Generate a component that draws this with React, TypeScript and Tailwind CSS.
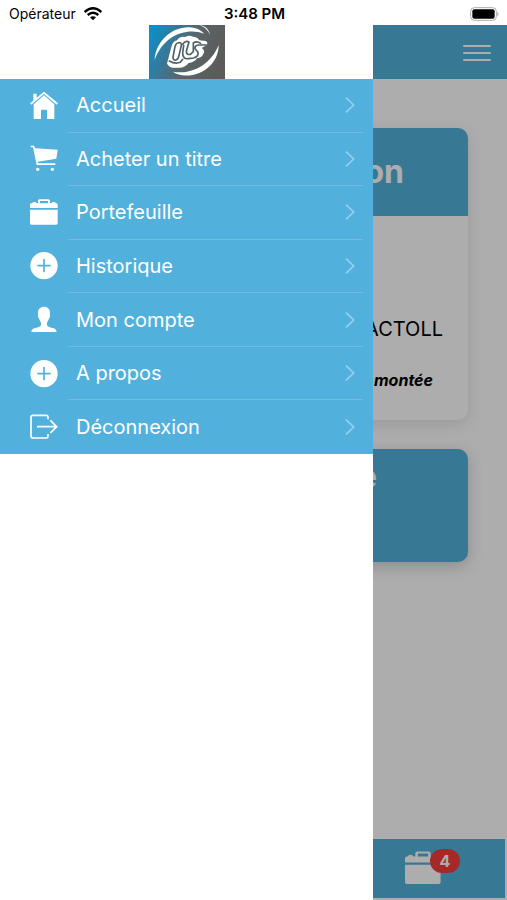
import React from "react";

const iconClass = "block h-7 w-7 shrink-0";

function HomeIcon() {
  return (
    <svg viewBox="0 0 84 84" className={iconClass} fill="currentColor" aria-hidden="true">
      <path d="M42 -1 84 34 80 38 42 6 4 38 0 34 10 26V5H20V17Z" />
      <path d="M42 10 73 37V81H51V53H33V81H11V37Z" />
    </svg>
  );
}

function CartIcon() {
  return (
    <svg viewBox="0 0 84 84" className={iconClass} fill="currentColor" aria-hidden="true">
      <path d="M1 2H12L16 10L83 14 79 41 23 50 24 55H76V60H20L9 7H3Z" />
      <circle cx="23" cy="73" r="5" />
      <circle cx="67" cy="73" r="5" />
    </svg>
  );
}

function CaseIcon({ className = iconClass }: { className?: string }) {
  return (
    <svg viewBox="0 0 84 84" className={className} fill="currentColor" aria-hidden="true">
      <path d="M0 27V17Q0 13 4 13H6Q8 9 13 9Q18 9 20 13H24V6Q24 1 29 1H55Q60 1 60 6V13H64Q66 9 71 9Q76 9 78 13Q83 13 83 17V27ZM30 13H54V6H30Z" fillRule="evenodd" />
      <path d="M0 32H83V73Q83 77 79 77H4Q0 77 0 73Z" />
    </svg>
  );
}

function PlusIcon() {
  return (
    <svg viewBox="0 0 84 84" className={iconClass} aria-hidden="true">
      <circle cx="42" cy="41" r="41" fill="currentColor" />
      <path d="M42 21V61M22 41H62" stroke="#52b1dc" strokeWidth="5" />
    </svg>
  );
}

function PersonIcon() {
  return (
    <svg viewBox="0 0 84 84" className={iconClass} fill="currentColor" aria-hidden="true">
      <path d="M42 2C53 2 60 9 60 20C60 24 59 27 60 30C60 35 57 36 56 40C55 45 51 47 51 52C50 61 54 62 64 65C74 67 79 69 80 78H4C5 69 10 67 20 65C30 62 34 61 33 52C33 47 29 45 28 40C27 36 24 35 24 30C25 27 24 24 24 20C24 9 31 2 42 2Z" />
    </svg>
  );
}

function LogoutIcon() {
  return (
    <svg viewBox="0 0 84 84" className={iconClass} fill="none" stroke="currentColor" strokeWidth="5" aria-hidden="true">
      <path d="M54 19V13Q54 7 48 7H9Q3 7 3 13V69Q3 75 9 75H48Q54 75 54 69V63M21 41H80M61 22 80 41 61 60" />
    </svg>
  );
}

function Logo() {
  return (
    <svg viewBox="0 0 228 162" className="block h-[54px] w-[76px]" role="img" aria-label="Logo">
      <defs>
        <linearGradient id="logoFill" x1="0" y1="0.2" x2="1" y2="0.5">
          <stop offset="0" stopColor="#0b8fc9" />
          <stop offset="0.28" stopColor="#36799b" />
          <stop offset="0.58" stopColor="#5b6468" />
          <stop offset="1" stopColor="#5c5b5a" />
        </linearGradient>
      </defs>
      <rect width="228" height="162" fill="url(#logoFill)" />
      <g fill="#fff">
        <path d="M17 105C20 48 70 5 121 7C143 8 156 16 165 26C115 8 45 28 17 105Z" />
        <path d="M151 0C171 3 180 14 183 29C176 15 168 7 151 0Z" />
        <path d="M209 60C209 116 158 157 100 151C88 149 79 145 72 140C125 150 184 122 209 60Z" />
      </g>
      <path
        d="M54 116L66 70Q71 48 84 46Q92 33 109 36Q120 29 132 35Q145 35 151 46L170 48Q178 51 173 61L158 69Q170 76 163 87Q158 98 144 100Q135 113 119 114Q106 130 87 128Q62 131 54 116Z"
        fill="#fff"
      />
      <g fill="none" stroke="#4f6068" strokeWidth="5" strokeLinecap="round" strokeLinejoin="round">
        <path d="M86 54Q79 56 77 70L72 96Q72 107 81 105Q88 103 90 91L97 61Q98 50 86 54Z" />
        <path d="M101 58L105 53Q112 46 120 51L112 79Q113 91 124 88L133 80V54Q143 47 155 55" />
        <path d="M104 61L101 84Q101 103 118 101L134 99Q150 94 147 82L137 70Q138 61 148 60H172" />
        <path d="M61 108Q78 118 94 112L101 103" />
      </g>
    </svg>
  );
}

const items = [
  { label: "Accueil", icon: <HomeIcon /> },
  { label: "Acheter un titre", icon: <CartIcon /> },
  { label: "Portefeuille", icon: <CaseIcon /> },
  { label: "Historique", icon: <PlusIcon /> },
  { label: "Mon compte", icon: <PersonIcon /> },
  { label: "A propos", icon: <PlusIcon /> },
  { label: "Déconnexion", icon: <LogoutIcon /> },
];

function StatusBar() {
  return (
    <div className="grid h-[25px] grid-cols-3 items-center bg-white pt-0.5 pr-[7px] pl-[9px] text-sm text-black">
      <div className="flex items-center gap-2">
        <span>Opérateur</span>
        <svg viewBox="0 0 54 42" className="h-[14px] w-[18px]" aria-hidden="true">
          <g fill="none" stroke="#000" strokeWidth="7">
            <path d="M2 15Q27 -7 52 15" />
            <path d="M11 24Q27 10 43 24" />
          </g>
          <path d="M18 31Q27 24 36 31L27 40Z" />
        </svg>
      </div>
      <span className="text-center text-[15px] font-semibold">3:48 PM</span>
      <svg viewBox="0 0 90 42" className="h-[14px] w-[30px] justify-self-end" aria-hidden="true">
        <rect x="2" y="2" width="77" height="38" rx="11" fill="#fff" stroke="#aaa" strokeWidth="3" />
        <rect x="7" y="7" width="67" height="28" rx="6" fill="#000" />
        <path d="M82 14Q90 21 82 28Z" fill="#aaa" />
      </svg>
    </div>
  );
}

function Drawer() {
  return (
    <aside className="absolute inset-y-0 left-0 w-[373px] max-w-full bg-white">
      <div className="flex justify-center">
        <Logo />
      </div>
      <nav className="bg-[#52b1dc] text-white">
        <ul className="grid h-[375px] auto-rows-fr">
          {items.map((item, i) => (
            <li key={item.label}>
              <button type="button" className="flex h-full w-full items-center pr-[10px] pl-[30px] text-left">
                {item.icon}
                <span
                  className={
                    "ml-[10px] flex h-full flex-1 items-center justify-between border-b pr-2 pl-2 text-xl " +
                    (i < items.length - 1 ? "border-[#76b9d8]" : "border-transparent")
                  }
                >
                  {item.label}
                  <svg viewBox="0 0 30 48" className="h-4 w-[10px]" fill="none" stroke="#94d0ec" strokeWidth="5" aria-hidden="true">
                    <path d="M3 2 26 24 3 46" />
                  </svg>
                </span>
              </button>
            </li>
          ))}
        </ul>
      </nav>
    </aside>
  );
}

export default function App() {
  return (
    <div className="flex min-h-screen flex-col bg-white font-['Inter','Liberation_Sans',sans-serif]">
      <StatusBar />
      <div className="relative flex flex-1 flex-col overflow-hidden">
        <header className="flex h-[54px] items-center justify-end bg-[#52b1dc] pt-0.5 pr-4">
          <button type="button" aria-label="Menu" className="flex w-7 flex-col gap-[5px]">
            <span className="h-[2px] rounded-full bg-white" />
            <span className="h-[2px] rounded-full bg-white" />
            <span className="h-[2px] rounded-full bg-white" />
          </button>
        </header>
        <main className="flex flex-1 flex-col gap-[29px] px-[39px] pt-[49px] pb-8">
          <section className="overflow-hidden rounded-[10px] bg-white text-right text-black shadow-[0_4px_16px_rgba(0,0,0,0.12)]">
            <h2 className="flex h-[88px] items-center justify-end bg-[#52b1dc] pr-16 text-[32px] font-bold text-white">
              on
            </h2>
            <div className="flex flex-col gap-[25px] pt-[99px] pb-7">
              <p className="pr-[25px] text-xl">ACTOLL</p>
              <p className="pr-[35px] text-base font-bold italic">montée</p>
            </div>
          </section>
          <section className="h-[113px] rounded-[10px] bg-[#52b1dc] pt-2 pr-[91px] text-right shadow-[0_4px_16px_rgba(0,0,0,0.2)]">
            <h2 className="text-[32px] leading-10 font-bold text-white">e</h2>
          </section>
        </main>
        <footer className="mr-0.5 mb-0.5 flex h-[59px] items-center justify-end bg-[#52b1dc] pr-[45px]">
          <button type="button" aria-label="Portefeuille" className="relative flex w-[55px] text-white">
            <CaseIcon className="h-9 w-9" />
            <span className="absolute -top-0.5 right-0 flex h-6 w-[30px] items-center justify-center rounded-full bg-[#f53d3d] text-base font-bold">
              4
            </span>
          </button>
        </footer>
        <div className="absolute inset-0 bg-black/32" />
        <Drawer />
      </div>
    </div>
  );
}
